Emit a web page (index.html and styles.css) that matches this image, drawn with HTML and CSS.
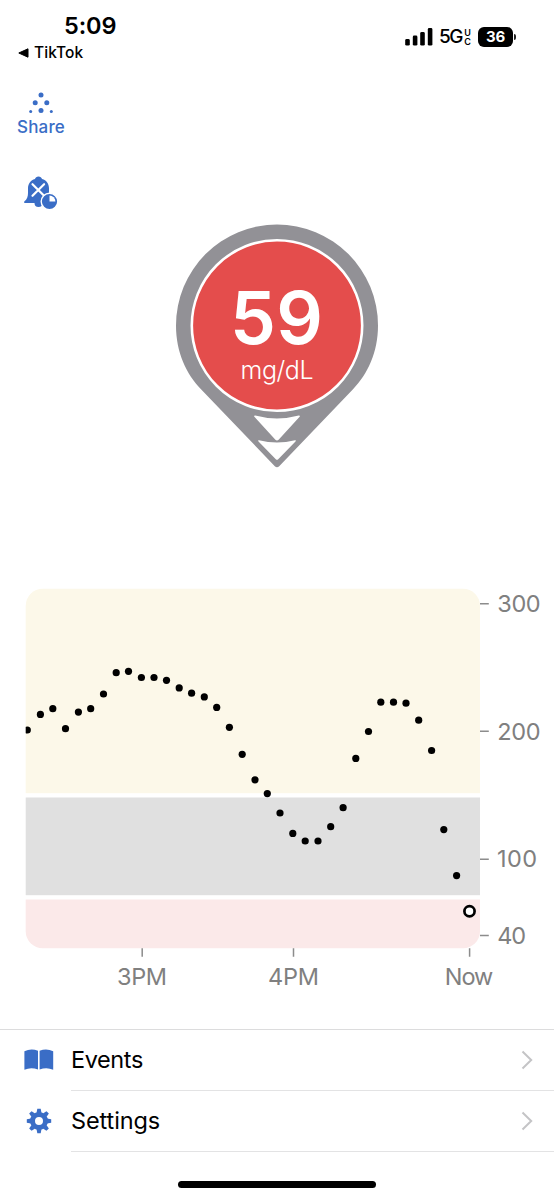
FILE: index.html
```html
<!DOCTYPE html>
<html lang="en">
<head>
<meta charset="utf-8">
<title>Glucose</title>
<link rel="stylesheet" href="styles.css">
</head>
<body>
<div class="screen">
  <header class="status">
    <div class="status-left">
      <div class="time">5:09</div>
      <div class="back"><svg width="11" height="10" viewBox="0 0 11 10"><path d="M10 .8v8.4L.8 5z" fill="#000" stroke="#000" stroke-linejoin="round"/></svg><span>TikTok</span></div>
    </div>
    <div class="status-right">
      <svg class="signal" width="28" height="18" viewBox="0 0 28 18"><rect x=".2" y="11" width="4.6" height="6.6" rx="1.4"/><rect x="7.8" y="7.6" width="4.6" height="10" rx="1.4"/><rect x="15.2" y="4" width="4.6" height="13.6" rx="1.4"/><rect x="22.8" y="0" width="4.6" height="17.6" rx="1.4"/></svg>
      <span class="network">5G</span>
      <span class="uc"><span>U</span><span>C</span></span>
      <span class="battery">36</span>
      <span class="battery-cap"></span>
    </div>
  </header>

  <nav class="actions">
    <a class="share">
      <svg width="26" height="24" viewBox="0 0 26 24" fill="#3a6dc6"><circle cx="13" cy="4" r="2.5"/><circle cx="7.2" cy="11.8" r="2.5"/><circle cx="18.8" cy="11.8" r="2.5"/><circle cx="13" cy="19.500" r="2.5"/><circle cx="2.700" cy="20.500" r="1.500"/><circle cx="23.300" cy="20.500" r="1.500"/></svg>
      <span>Share</span>
    </a>
    <svg class="bell" width="36" height="36" viewBox="0 0 36 36">
      <path fill="#3a6dc6" d="M14.5 1.500c1.800 0 3 1 3.500 2.400 4.600 1.200 7 4.800 7 9.400v4c0 3.500 1.300 5.600 4 7.700V28H18.500a4 4 0 0 1-8 0H.8c-.8 0-1-1.200-.3-1.700C3 24.500 4 21.500 4 18v-4.700C4 8.700 6.600 5.100 11 3.900c.5-1.400 1.700-2.400 3.500-2.400z"/>
      <path d="M8.500 9.200l11.600 11.600M20.100 9.200L8.500 20.800" stroke="#fff" stroke-width="2.200" stroke-linecap="round"/>
      <circle cx="25.500" cy="26.500" r="8.300" fill="#3a6dc6" stroke="#fff" stroke-width="1.400"/>
      <path fill="#fff" d="M25.500 20.600a5.900 5.900 0 0 1 5.900 5.900h-5.900z"/>
    </svg>
  </nav>

  <main>
    <svg class="reading" width="204" height="246" viewBox="175 223 204 246">
      <path fill="#929196" d="M277 224.500a101 101 0 0 1 101 101c0 27-10.500 48.500-25 63.700L279.200 466.200q-2.200 2.200-4.400 0L201 389.200c-14.500-15.200-25-36.700-25-63.700a101 101 0 0 1 101-101z"/>
      <circle cx="277" cy="325.500" r="85.200" fill="#e44d4c" stroke="#fff" stroke-width="2.600"/>
      <path fill="#fff" d="M255.200 415.600Q277 421.500 298.800 415.600q1.900-.2.600 1.400L278.600 439.800q-1.600 1.600-3.200 0L254.600 417q-1.300-1.600.6-1.400z"/>
      <path fill="#fff" d="M259 440.300Q277 444.900 295 440.300q1.600-.1.500 1.200L278.200 459.200q-1.200 1.200-2.400 0L258.500 441.500q-1.100-1.300.5-1.200z"/>
      <text class="value" x="230" y="344.300" textLength="93">59</text>
      <text class="unit" x="240.500" y="379.300" textLength="73">mg/dL</text>
    </svg>

    <svg class="chart" width="554" height="410" viewBox="0 585 554 410">
      <defs><clipPath id="plot"><rect x="25.700" y="588.700" width="454.300" height="359.600" rx="17"/></clipPath></defs>
      <g clip-path="url(#plot)">
        <rect x="25" y="588" width="455" height="205.200" fill="#fcf8e9"/>
        <rect x="25" y="797.500" width="455" height="97.700" fill="#e0e0e0"/>
        <rect x="25" y="899.500" width="455" height="50" fill="#fbe9e9"/>
        <g id="points">
          <circle cx="27.300" cy="730" r="3.600"/><circle cx="40.400" cy="714.400" r="3.600"/><circle cx="52.800" cy="708.700" r="3.600"/><circle cx="65.500" cy="728.700" r="3.600"/><circle cx="78.400" cy="712.100" r="3.600"/><circle cx="90.700" cy="708.700" r="3.600"/><circle cx="103.500" cy="694" r="3.600"/><circle cx="116.200" cy="672.700" r="3.600"/><circle cx="128.500" cy="671.300" r="3.600"/><circle cx="141.400" cy="677.500" r="3.600"/><circle cx="154" cy="677.500" r="3.600"/><circle cx="166.500" cy="680.300" r="3.600"/><circle cx="179.200" cy="687.900" r="3.600"/><circle cx="191.600" cy="693.200" r="3.600"/><circle cx="204.300" cy="696.900" r="3.600"/><circle cx="216.700" cy="707.400" r="3.600"/><circle cx="229.400" cy="727.300" r="3.600"/><circle cx="242.200" cy="754.300" r="3.600"/><circle cx="255" cy="779.800" r="3.600"/><circle cx="267.300" cy="793.600" r="3.600"/><circle cx="280" cy="813" r="3.600"/><circle cx="292.800" cy="833.400" r="3.600"/><circle cx="305.200" cy="841" r="3.600"/><circle cx="318" cy="841" r="3.600"/><circle cx="330.700" cy="826.700" r="3.600"/><circle cx="343.100" cy="807.700" r="3.600"/><circle cx="355.800" cy="758.400" r="3.600"/><circle cx="368.500" cy="731.500" r="3.600"/><circle cx="380.800" cy="702.200" r="3.600"/><circle cx="393.500" cy="702.200" r="3.600"/><circle cx="406" cy="703.200" r="3.600"/><circle cx="418.700" cy="720.200" r="3.600"/><circle cx="431.600" cy="750.500" r="3.600"/><circle cx="443.800" cy="829.600" r="3.600"/><circle cx="456.600" cy="875.600" r="3.600"/>
        </g>
      </g>
      <circle cx="469.500" cy="911.200" r="5.100" fill="#fff" stroke="#000" stroke-width="2.700"/>
      <path d="M480 603.800h8.800M480 731.200h8.800M480 859.200h8.800M480 935.500h8.800M142.200 948.300v8.500M293.500 948.300v8.500M469.600 948.300v8.500" stroke="#8c8c8c" stroke-width="1.500"/>
      <g class="labels">
        <text x="497.200" y="612" textLength="43.500">300</text>
        <text x="497.200" y="739.500" textLength="43.500">200</text>
        <text x="497" y="867" textLength="40">100</text>
        <text x="497.200" y="943.500" textLength="29">40</text>
        <text x="117" y="985.300" textLength="50">3PM</text>
        <text x="268" y="985.300" textLength="51">4PM</text>
        <text x="444.800" y="985.300" textLength="48.500">Now</text>
      </g>
    </svg>
  </main>

  <section class="menu">
    <div class="row">
      <svg class="icon" width="30" height="22" viewBox="0 0 30 22" fill="#3a6dc6"><path d="M.4 2.300Q7 -1 14 1.800V20.600Q7 17.800.4 20.800zM15.600 1.800Q22.600-1 29.200 2.300V20.800Q22.600 17.800 15.600 20.600z"/></svg>
      <div class="item"><span class="events">Events</span><svg width="12" height="20" viewBox="0 0 12 20"><path d="M1.500 1.500l8.700 8.500-8.700 8.500" fill="none" stroke="#c4c4c6" stroke-width="2"/></svg></div>
    </div>
    <div class="row">
      <svg class="icon" width="30" height="26" viewBox="-15 -13 30 26" fill="#3a6dc6">
        <circle r="6.500" fill="none" stroke="#3a6dc6" stroke-width="5"/>
        <g id="teeth"><path id="tooth" d="M-2.500-8L-1.700-12.200h3.400L2.500-8z"/><use href="#tooth" transform="rotate(45)"/><use href="#tooth" transform="rotate(90)"/><use href="#tooth" transform="rotate(135)"/><use href="#tooth" transform="rotate(180)"/><use href="#tooth" transform="rotate(225)"/><use href="#tooth" transform="rotate(270)"/><use href="#tooth" transform="rotate(315)"/></g>
      </svg>
      <div class="item"><span class="settings">Settings</span><svg width="12" height="20" viewBox="0 0 12 20"><path d="M1.500 1.500l8.700 8.500-8.700 8.500" fill="none" stroke="#c4c4c6" stroke-width="2"/></svg></div>
    </div>
  </section>
  <div class="home"></div>
</div>
</body>
</html>
```

FILE: styles.css
```css
* { box-sizing: border-box; }
body { margin: 0; background: #fff; color: #000; font-family: Inter, "Liberation Sans", sans-serif; }
svg { display: block; flex: none; }
.screen { width: 554px; height: 1200px; overflow: hidden; }

.status { display: flex; justify-content: space-between; height: 88px; padding: 12px 38px 0 18px; }
.status-left { display: flex; flex-direction: column; gap: 4px; }
.time { padding-left: 46px; font-size: 23.500px; line-height: 28px; font-weight: 600; letter-spacing: -.1px; }
.back { display: flex; align-items: center; gap: 5px; font-size: 15.500px; line-height: 18px; font-weight: 500; letter-spacing: .1px; }
.status-right { display: flex; align-items: center; height: 28px; margin-top: 11px; }
.signal { fill: #000; }
.network { margin-left: 6px; width: 24px; font-size: 19px; line-height: 30px; letter-spacing: -1.500px; font-weight: 500; }
.uc { display: flex; flex-direction: column; width: 9px; font-size: 9px; line-height: 9px; font-weight: 600; align-items: center; }
.battery { width: 35px; height: 20px; margin-left: 6px; border-radius: 6px; background: #000; color: #fff; font-size: 15px; line-height: 20px; font-weight: 700; letter-spacing: -.3px; text-align: center; }
.battery-cap { width: 2px; height: 6px; margin-left: 1px; border-radius: 0 3px 3px 0; background: #222; }

.actions { height: 135px; padding-left: 17px; }
.share { display: flex; flex-direction: column; align-items: center; width: 48px; padding-top: 3px; color: #3a6dc6; font-size: 17px; line-height: 24px; font-weight: 500; letter-spacing: .2px; }
.bell { margin: 36px 0 0 7px; }

main { height: 806px; }
.reading { margin-left: 175px; }
.chart { margin-top: 116px; }
.value { font-size: 73px; font-weight: 600; fill: #fff; }
.unit { font-size: 25px; font-weight: 300; fill: #fff; }
.labels { font-size: 23.500px; fill: #808080; }

.menu { border-top: 1px solid #dcdcdd; }
.row { display: flex; align-items: center; height: 61px; padding-left: 24px; }
.icon { margin-top: -2px; }
.item { display: flex; flex: 1; align-items: center; justify-content: space-between; height: 61px; margin-left: 17px; padding-right: 21px; border-bottom: 1px solid #e3e3e4; font-size: 23.500px; line-height: 30px; }
.events { letter-spacing: -.4px; }
.settings { letter-spacing: -.1px; }
.home { width: 198px; height: 7px; margin: 29px auto 0; border-radius: 4px; background: #000; }
```
